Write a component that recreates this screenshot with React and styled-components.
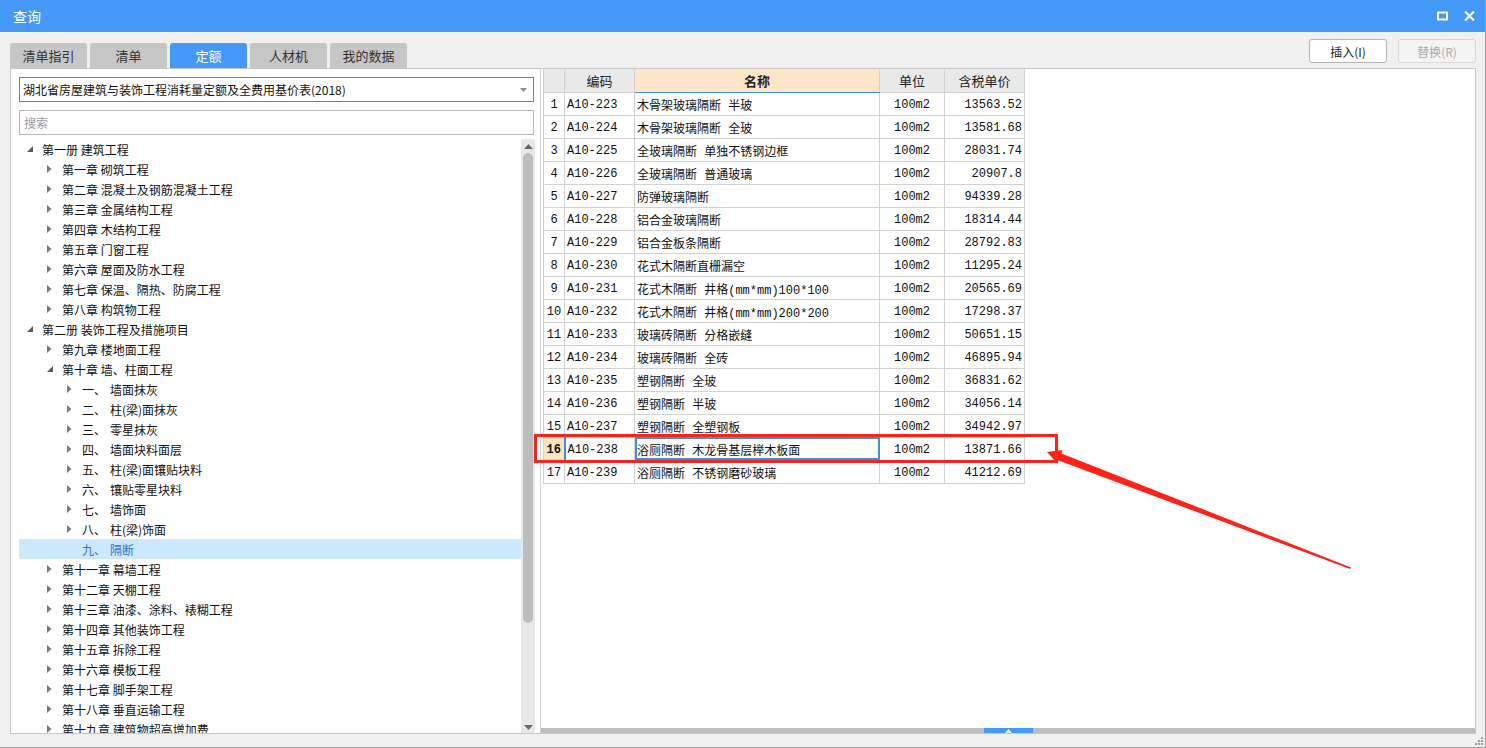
import React from "react";
import styled, { createGlobalStyle } from "styled-components";

const GlobalStyle = createGlobalStyle`
  html, body {
    margin: 0;
    padding: 0;
    background: #f0f0f0;
  }
  body {
    font-family: "Noto Sans CJK SC", "Liberation Sans", sans-serif;
    color: #1a1a1a;
  }
`;

const Window = styled.div`
  position: relative;
  width: 1486px;
  height: 748px;
  box-sizing: border-box;
  border-right: 1px solid #a0a0a0;
  border-bottom: 1px solid #a0a0a0;
  display: flex;
  flex-direction: column;
  background: #f0f0f0;
  overflow: hidden;
`;

const TitleBar = styled.div`
  height: 32px;
  flex: none;
  background: #4499f7;
  display: flex;
  align-items: center;
  padding: 0 8px 0 13px;
  color: #fff;
  font-size: 14px;
`;

const Title = styled.span`
  flex: 1;
  line-height: 32px;
`;

const TitleIcons = styled.div`
  display: flex;
  align-items: center;
  gap: 16px;
  margin-right: 2px;
`;

const Body = styled.div`
  flex: 1;
  display: flex;
  flex-direction: column;
  padding: 0 9px 13px 10px;
  min-height: 0;
`;

const TopBar = styled.div`
  height: 36px;
  flex: none;
  display: flex;
  justify-content: space-between;
`;

const Tabs = styled.div`
  display: flex;
  align-items: flex-end;
  gap: 3px;
`;

const Tab = styled.div`
  width: 77px;
  height: 25px;
  border-radius: 3px 3px 0 0;
  display: flex;
  align-items: center;
  justify-content: center;
  font-size: 13px;
  background: ${(p) => (p.$active ? "#4499f7" : "#c6c6c6")};
  color: ${(p) => (p.$active ? "#fff" : "#333")};
`;

const Buttons = styled.div`
  display: flex;
  gap: 11px;
  padding-top: 7px;
`;

const Button = styled.div`
  width: 78px;
  height: 24px;
  box-sizing: border-box;
  border: 1px solid ${(p) => (p.$disabled ? "#d8d8d8" : "#b4b4b4")};
  border-radius: 3px;
  background: ${(p) => (p.$disabled ? "#f4f4f4" : "#fff")};
  color: ${(p) => (p.$disabled ? "#ababab" : "#222")};
  font-size: 12px;
  display: flex;
  align-items: center;
  justify-content: center;
`;

const Main = styled.div`
  flex: 1;
  min-height: 0;
  display: flex;
  border: 1px solid #c8c8c8;
  background: #fff;
`;

const LeftPanel = styled.div`
  width: 524px;
  flex: none;
  display: flex;
  flex-direction: column;
  padding: 8px 0 0 8px;
  box-sizing: border-box;
  min-height: 0;
`;

const Select = styled.div`
  height: 25px;
  box-sizing: border-box;
  margin-right: 1px;
  border: 1px solid #3d8ee8;
  display: flex;
  align-items: center;
  padding: 0 6px 0 3px;
  font-size: 12px;
  color: #111;
`;

const SelectText = styled.span`
  flex: 1;
`;

const Search = styled.div`
  height: 25px;
  box-sizing: border-box;
  margin: 8px 1px 4px 0;
  border: 1px solid #b8b8b8;
  display: flex;
  align-items: center;
  padding: 0 4px;
  font-size: 12px;
  color: #9a9a9a;
`;

const TreeArea = styled.div`
  flex: 1;
  min-height: 0;
  display: flex;
`;

const TreeList = styled.div`
  flex: 1;
  overflow: hidden;
`;

const TreeRow = styled.div`
  height: 20px;
  display: flex;
  align-items: center;
  padding-left: ${(p) => 8 + p.$level * 20}px;
  font-size: 12px;
  background: ${(p) => (p.$selected ? "#cce8ff" : "transparent")};
  color: ${(p) => (p.$selected ? "#2f74d0" : "#111")};
  white-space: nowrap;
`;

const Expander = styled.span`
  width: 15px;
  flex: none;
  display: flex;
  align-items: center;
`;

const Num = styled.span`
  width: 28px;
  flex: none;
`;

const VScroll = styled.div`
  width: 14px;
  flex: none;
  background: #e8e8e8;
  display: flex;
  flex-direction: column;
  align-items: center;
  padding: 5px 0 3px;
  box-sizing: border-box;
`;

const VThumb = styled.div`
  width: 10px;
  height: 470px;
  margin-top: 4px;
  border-radius: 5px;
  background: #bdbdbd;
`;

const Spacer = styled.div`
  flex: 1;
`;

const Splitter = styled.div`
  width: 5px;
  flex: none;
  border-right: 1px solid #d6d6d6;
`;

const RightPanel = styled.div`
  flex: 1;
  display: flex;
  flex-direction: column;
  min-width: 0;
`;

const TableArea = styled.div`
  flex: 1;
  padding: 0 0 0 2px;
`;

const Table = styled.table`
  border-collapse: collapse;
  table-layout: fixed;
  width: 481px;
  font-size: 12px;
`;

const Th = styled.th`
  height: 23px;
  padding: 1px 0 0;
  box-sizing: border-box;
  border: 1px solid #d2d2d2;
  border-top: none;
  background: ${(p) => (p.$hl ? "#fde6c8" : "#e9e9e9")};
  border-bottom: ${(p) => (p.$hl ? "1px solid #3d8ee8" : "1px solid #d2d2d2")};
  font-weight: ${(p) => (p.$hl ? 700 : 400)};
  font-size: 13px;
  color: #222;
`;

const Td = styled.td`
  height: 23px;
  padding: 2px 2px 0;
  box-sizing: border-box;
  border: 1px solid #d2d2d2;
  white-space: nowrap;
  overflow: hidden;
  font-family: "Liberation Mono", "Noto Sans CJK SC", monospace;
  color: #111;
  text-align: ${(p) => p.$align || "left"};
`;

const IdxTd = styled(Td)`
  text-align: center;
  padding: 2px 0 0;
  background: ${(p) => (p.$active ? "#fde3c2" : "#fff")};
  font-weight: ${(p) => (p.$active ? 700 : 400)};
  border-right: ${(p) => (p.$active ? "2px solid #3d8ee8" : "1px solid #d2d2d2")};
`;

const NameTd = styled(Td)`
  outline: ${(p) => (p.$active ? "2px solid #3d8ee8" : "none")};
  outline-offset: -2px;
`;

const HScroll = styled.div`
  height: 5px;
  flex: none;
  background: #bdbdbd;
  display: flex;
  padding-left: 443px;
`;

const HHandle = styled.div`
  width: 49px;
  height: 5px;
  background: #4499f7;
  display: flex;
  justify-content: center;
  align-items: center;
`;

const Overlay = styled.svg`
  position: absolute;
  left: 0;
  top: 0;
  pointer-events: none;
`;

const Grip = styled.svg`
  position: absolute;
  right: 2px;
  bottom: 2px;
`;

const tree = [
  { l: 0, t: "第一册 建筑工程", open: true },
  { l: 1, t: "第一章 砌筑工程" },
  { l: 1, t: "第二章 混凝土及钢筋混凝土工程" },
  { l: 1, t: "第三章 金属结构工程" },
  { l: 1, t: "第四章 木结构工程" },
  { l: 1, t: "第五章 门窗工程" },
  { l: 1, t: "第六章 屋面及防水工程" },
  { l: 1, t: "第七章 保温、隔热、防腐工程" },
  { l: 1, t: "第八章 构筑物工程" },
  { l: 0, t: "第二册 装饰工程及措施项目", open: true },
  { l: 1, t: "第九章 楼地面工程" },
  { l: 1, t: "第十章 墙、柱面工程", open: true },
  { l: 2, n: "一、", t: "墙面抹灰" },
  { l: 2, n: "二、", t: "柱(梁)面抹灰" },
  { l: 2, n: "三、", t: "零星抹灰" },
  { l: 2, n: "四、", t: "墙面块料面层" },
  { l: 2, n: "五、", t: "柱(梁)面镶贴块料" },
  { l: 2, n: "六、", t: "镶贴零星块料" },
  { l: 2, n: "七、", t: "墙饰面" },
  { l: 2, n: "八、", t: "柱(梁)饰面" },
  { l: 2, n: "九、", t: "隔断", leaf: true, sel: true },
  { l: 1, t: "第十一章 幕墙工程" },
  { l: 1, t: "第十二章 天棚工程" },
  { l: 1, t: "第十三章 油漆、涂料、裱糊工程" },
  { l: 1, t: "第十四章 其他装饰工程" },
  { l: 1, t: "第十五章 拆除工程" },
  { l: 1, t: "第十六章 模板工程" },
  { l: 1, t: "第十七章 脚手架工程" },
  { l: 1, t: "第十八章 垂直运输工程" },
  { l: 1, t: "第十九章 建筑物超高增加费" },
];

const rows = [
  ["A10-223", "木骨架玻璃隔断 半玻", "13563.52"],
  ["A10-224", "木骨架玻璃隔断 全玻", "13581.68"],
  ["A10-225", "全玻璃隔断 单独不锈钢边框", "28031.74"],
  ["A10-226", "全玻璃隔断 普通玻璃", "20907.8"],
  ["A10-227", "防弹玻璃隔断", "94339.28"],
  ["A10-228", "铝合金玻璃隔断", "18314.44"],
  ["A10-229", "铝合金板条隔断", "28792.83"],
  ["A10-230", "花式木隔断直栅漏空", "11295.24"],
  ["A10-231", "花式木隔断 井格(mm*mm)100*100", "20565.69"],
  ["A10-232", "花式木隔断 井格(mm*mm)200*200", "17298.37"],
  ["A10-233", "玻璃砖隔断 分格嵌缝", "50651.15"],
  ["A10-234", "玻璃砖隔断 全砖", "46895.94"],
  ["A10-235", "塑钢隔断 全玻", "36831.62"],
  ["A10-236", "塑钢隔断 半玻", "34056.14"],
  ["A10-237", "塑钢隔断 全塑钢板", "34942.97"],
  ["A10-238", "浴厕隔断 木龙骨基层榉木板面", "13871.66"],
  ["A10-239", "浴厕隔断 不锈钢磨砂玻璃", "41212.69"],
];

function Arrow({ open, leaf }) {
  if (leaf) return <Expander />;
  return (
    <Expander>
      {open ? (
        <svg width="7" height="7" viewBox="0 0 7 7">
          <polygon points="6,0 6,6 0,6" fill="#5a5a5a" />
        </svg>
      ) : (
        <svg width="5" height="8" viewBox="0 0 5 8">
          <polygon points="0,0 4.5,4 0,8" fill="#7a7a7a" />
        </svg>
      )}
    </Expander>
  );
}

export default function App() {
  return (
    <>
      <GlobalStyle />
      <Window>
        <TitleBar>
          <Title>查询</Title>
          <TitleIcons>
            <svg width="11" height="10" viewBox="0 0 11 10">
              <rect x="1" y="1.5" width="9" height="7" fill="none" stroke="#fff" strokeWidth="2" />
            </svg>
            <svg width="11" height="10" viewBox="0 0 11 10">
              <path d="M1 0.5 L10 9.5 M10 0.5 L1 9.5" stroke="#fff" strokeWidth="2.2" />
            </svg>
          </TitleIcons>
        </TitleBar>
        <Body>
          <TopBar>
            <Tabs>
              <Tab>清单指引</Tab>
              <Tab>清单</Tab>
              <Tab $active>定额</Tab>
              <Tab>人材机</Tab>
              <Tab>我的数据</Tab>
            </Tabs>
            <Buttons>
              <Button>插入(I)</Button>
              <Button $disabled>替换(R)</Button>
            </Buttons>
          </TopBar>
          <Main>
            <LeftPanel>
              <Select>
                <SelectText>湖北省房屋建筑与装饰工程消耗量定额及全费用基价表(2018)</SelectText>
                <svg width="7" height="4" viewBox="0 0 7 4">
                  <polygon points="0,0 7,0 3.5,4" fill="#8a8a8a" />
                </svg>
              </Select>
              <Search>搜索</Search>
              <TreeArea>
                <TreeList>
                  {tree.map((n, i) => (
                    <TreeRow key={i} $level={n.l} $selected={n.sel}>
                      <Arrow open={n.open} leaf={n.leaf} />
                      {n.n && <Num>{n.n}</Num>}
                      <span>{n.t}</span>
                    </TreeRow>
                  ))}
                </TreeList>
                <VScroll>
                  <svg width="9" height="5" viewBox="0 0 9 5">
                    <polygon points="0,5 9,5 4.5,0" fill="#6a6a6a" />
                  </svg>
                  <VThumb />
                  <Spacer />
                  <svg width="9" height="5" viewBox="0 0 9 5">
                    <polygon points="0,0 9,0 4.5,5" fill="#6a6a6a" />
                  </svg>
                </VScroll>
              </TreeArea>
            </LeftPanel>
            <Splitter />
            <RightPanel>
              <TableArea>
                <Table>
                  <colgroup>
                    <col style={{ width: 21 }} />
                    <col style={{ width: 70 }} />
                    <col style={{ width: 245 }} />
                    <col style={{ width: 65 }} />
                    <col style={{ width: 80 }} />
                  </colgroup>
                  <thead>
                    <tr>
                      <Th />
                      <Th>编码</Th>
                      <Th $hl>名称</Th>
                      <Th>单位</Th>
                      <Th>含税单价</Th>
                    </tr>
                  </thead>
                  <tbody>
                    {rows.map((r, i) => {
                      const active = i === 15;
                      return (
                        <tr key={r[0]}>
                          <IdxTd $active={active}>{i + 1}</IdxTd>
                          <Td>{r[0]}</Td>
                          <NameTd $active={active}>{r[1]}</NameTd>
                          <Td $align="center">100m2</Td>
                          <Td $align="right">{r[2]}</Td>
                        </tr>
                      );
                    })}
                  </tbody>
                </Table>
              </TableArea>
              <HScroll>
                <HHandle>
                  <svg width="7" height="4" viewBox="0 0 7 4">
                    <polygon points="0,4 7,4 3.5,0" fill="#fff" />
                  </svg>
                </HHandle>
              </HScroll>
            </RightPanel>
          </Main>
        </Body>
        <Grip width="8" height="8" viewBox="0 0 8 8">
          <rect x="6" y="0" width="2" height="2" fill="#a0a0a0" />
          <rect x="3" y="3" width="2" height="2" fill="#a0a0a0" />
          <rect x="6" y="3" width="2" height="2" fill="#a0a0a0" />
          <rect x="0" y="6" width="2" height="2" fill="#a0a0a0" />
          <rect x="3" y="6" width="2" height="2" fill="#a0a0a0" />
          <rect x="6" y="6" width="2" height="2" fill="#a0a0a0" />
        </Grip>
        <Overlay width="1486" height="748" viewBox="0 0 1486 748">
          <rect x="535.5" y="435.5" width="521" height="26" fill="none" stroke="#fe2319" strokeWidth="3" />
          <polygon
            points="1047,452 1062.5,450 1061.4,453.5 1351,567.5 1350,569 1058.6,460.5 1057.5,463.5"
            fill="#fe2319"
          />
        </Overlay>
      </Window>
    </>
  );
}
